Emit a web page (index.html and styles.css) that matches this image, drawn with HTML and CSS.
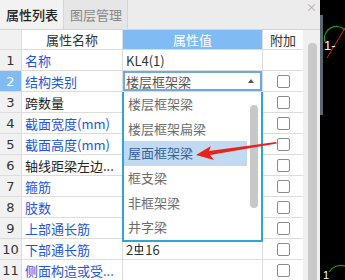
FILE: index.html
```html
<!DOCTYPE html>
<html>
<head>
<meta charset="utf-8">
<link rel="stylesheet" href="styles.css">
</head>
<body>
<div class="app">
  <div class="panel">
    <div class="tabs">
      <div class="tab active">属性列表</div>
      <div class="tab">图层管理</div>
      <div class="spacer"></div>
      <div class="close">×</div>
    </div>
    <div class="body">
      <div class="gridwrap">
        <div class="grid">
          <div class="hd num"></div><div class="hd">属性名称</div><div class="hd val">属性值</div><div class="hd">附加</div>

          <div class="num">1</div><div class="name blue">名称</div><div class="v">KL4(1)</div><div class="add"></div>
          <div class="num sel">2</div><div class="name blue">结构类别</div><div class="v select"><span>楼层框架梁</span><span class="caret"></span></div><div class="add"><i class="cb"></i></div>
          <div class="num">3</div><div class="name">跨数量</div><div class="v"></div><div class="add"><i class="cb"></i></div>
          <div class="num">4</div><div class="name blue">截面宽度(mm)</div><div class="v"></div><div class="add"><i class="cb"></i></div>
          <div class="num">5</div><div class="name blue">截面高度(mm)</div><div class="v"></div><div class="add"><i class="cb"></i></div>
          <div class="num">6</div><div class="name">轴线距梁左边...</div><div class="v"></div><div class="add"><i class="cb"></i></div>
          <div class="num">7</div><div class="name blue">箍筋</div><div class="v"></div><div class="add"><i class="cb"></i></div>
          <div class="num">8</div><div class="name blue">肢数</div><div class="v"></div><div class="add"><i class="cb"></i></div>
          <div class="num">9</div><div class="name blue">上部通长筋</div><div class="v"></div><div class="add"><i class="cb"></i></div>
          <div class="num">10</div><div class="name blue">下部通长筋</div><div class="v">2<svg class="steel" viewBox="0 0 10 13" width="10" height="13"><path d="M5 0.5V10.5M1.5 3.5H8.5V8H1.5ZM0.5 11.5H9.5" fill="none" stroke="#333" stroke-width="1.1"/></svg>16</div><div class="add"><i class="cb"></i></div>
          <div class="num">11</div><div class="name blue">侧面构造或受...</div><div class="v"></div><div class="add"><i class="cb"></i></div>
        </div>
        <div class="dropdown">
          <div class="items">
            <div class="item">楼层框架梁</div>
            <div class="item">楼层框架扁梁</div>
            <div class="item hl">屋面框架梁</div>
            <div class="item">框支梁</div>
            <div class="item">非框架梁</div>
            <div class="item">井字梁</div>
          </div>
          <div class="dscroll"><div class="dthumb"></div></div>
        </div>
        <svg class="arrow" viewBox="0 0 82 18" width="82" height="18"><path d="M0 13 L15 4 L13 9 L80 0 L81 1.5 L14 13 L18 18 Z" fill="#e8231c"/></svg>
      </div>
      <div class="vscroll"><div class="thumb"></div></div>
    </div>
  </div>
  <div class="edge"></div>
  <div class="canvas">
    <svg viewBox="0 0 22 280" width="22" height="280">
      <path d="M2 42 A12 12 0 0 1 22 30" fill="none" stroke="#1a9a1a" stroke-width="1.2"/>
      <line x1="4" y1="58" x2="22" y2="28" stroke="#e02020" stroke-width="1"/>
      <text x="1" y="50" fill="#fff" font-family="Liberation Sans" font-size="13">1-</text>
      <path d="M6 272 A14 14 0 0 1 22 266" fill="none" stroke="#1a9a1a" stroke-width="1.2"/>
      <text x="0" y="279" fill="#fff" font-family="Liberation Sans" font-size="11">1</text>
    </svg>
  </div>
</div>
</body>
</html>
```
FILE: styles.css
```css
* { box-sizing: border-box; }
html, body { margin: 0; padding: 0; }
body {
  width: 345px; height: 280px; overflow: hidden;
  font-family: "Noto Sans CJK SC", "Noto Sans", sans-serif;
  font-size: 13px; color: #333;
}
.app { display: flex; width: 345px; height: 280px; overflow: hidden; }
.panel { width: 320px; height: 280px; display: flex; flex-direction: column; background: #fff; overflow: hidden; }
.tabs {
  height: 30px; flex: none; display: flex; align-items: stretch;
  background: #ececec; border-bottom: 1px solid #d4d4d4;
}
.tab {
  padding: 0 5px 0 6px; display: flex; align-items: center;
  font-size: 13px; color: #888; border-right: 1px solid #d4d4d4;
  background: #e6e6e6;
}
.tab.active { color: #222; background: #f2f2f2; font-weight: 500; }
.spacer { flex: 1; }
.close { width: 14px; padding-top: 2px; color: #aaa; font-size: 11px; line-height: 11px; }
.body { flex: 1; display: flex; min-height: 0; overflow: hidden; }
.gridwrap { position: relative; width: 303px; }
.grid {
  display: grid;
  grid-template-columns: 21px 100px 139px 40px;
  grid-template-rows: 19px repeat(11, 20px);
  gap: 1px; background: #dcdcdc;
  border-right: 1px solid #dcdcdc;
  width: 303px;
}
.grid > div { background: #fff; display: flex; align-items: center; white-space: nowrap; overflow: hidden; }
.hd { justify-content: center; font-size: 13px; color: #333; }
.hd.val { background: #80bbf3 !important; color: #fff; }
.num { background: #f1f1f1 !important; justify-content: center; font-family: "DejaVu Sans", sans-serif; font-size: 13px; color: #333; }
.num.sel { background: #80bbf3 !important; color: #fff; }
.name { padding-left: 3px; color: #222; }
.name.blue { color: #2255dd; }
.v { padding-left: 3px; color: #333; }
.v.select {
  border: 2px solid #6ea9e6; padding-left: 1px; justify-content: space-between; padding-right: 6px;
  color: #555;
}
.caret { width: 0; height: 0; border-left: 3px solid transparent; border-right: 3px solid transparent; border-bottom: 4px solid #555; }
.steel { margin: 0 1px; vertical-align: middle; }
.add { justify-content: center; }
.cb { display: block; width: 13px; height: 13px; border: 1px solid #8a8a8a; border-radius: 2px; background: #fff; }
.dropdown {
  position: absolute; left: 122px; top: 62px; width: 141px; height: 150px;
  background: #fff; border: 2px solid #2ea4d9; border-top: none;
  display: flex;
}
.items { flex: 1; }
.item { height: 24.7px; line-height: 24.7px; padding-left: 4px; color: #6c6c6c; font-size: 13px; }
.item.hl { background: #c2daf1; color: #35629e; }
.dscroll { width: 14px; padding: 13px 3px 0 3px; }
.dthumb { width: 8px; height: 103px; border-radius: 4px; background: #c8c8c8; }
.arrow { position: absolute; left: 196px; top: 112px; }
.vscroll { width: 17px; background: #f0f0f0; padding: 13px 3px 0 5px; }
.thumb { width: 9px; height: 237px; border-radius: 4px 4px 0 0; background: #c9c9c9; }
.edge { width: 3px; background: linear-gradient(to bottom, #000 15px, #5b6670 15px, #5b6670 115px, #000 115px); }
.canvas { flex: 1; background: #000; }
.canvas svg { display: block; }
```
